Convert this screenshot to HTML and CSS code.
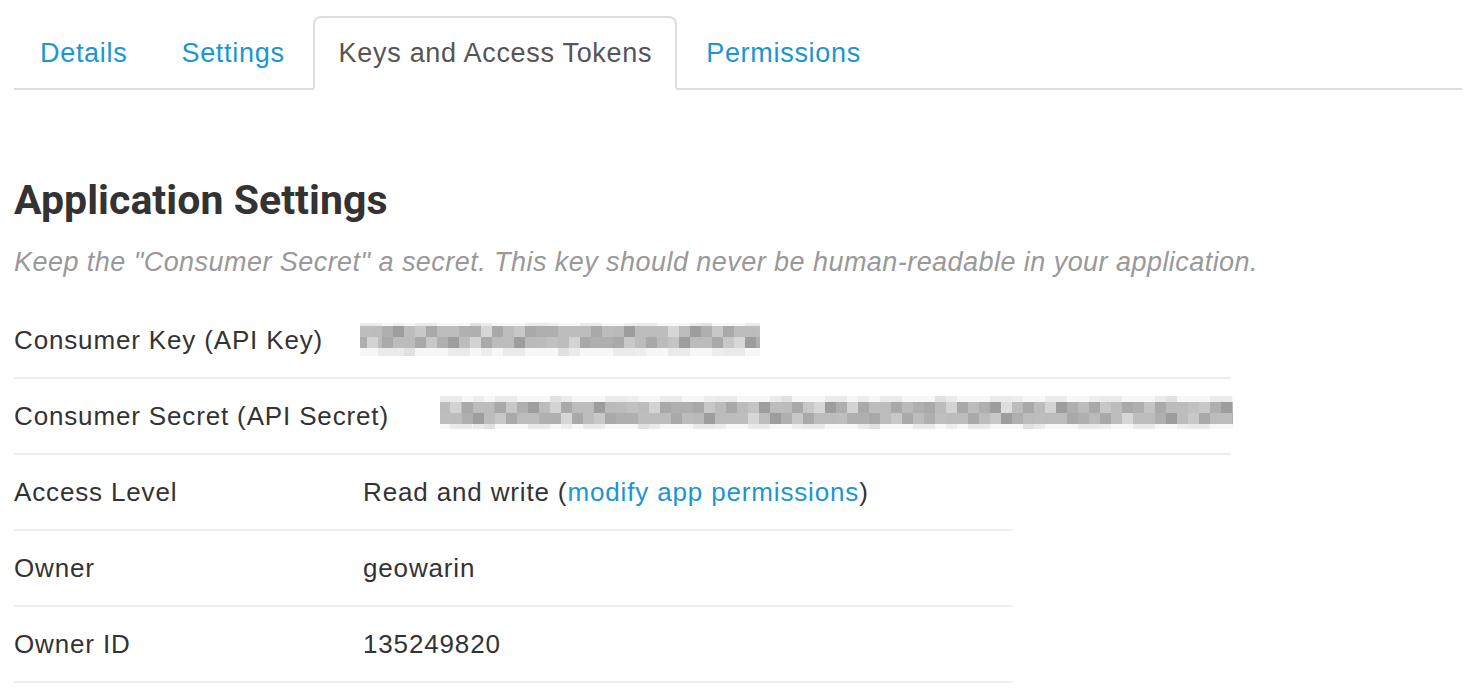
FILE: index.html
```html
<!DOCTYPE html>
<html lang="en">
<head>
<meta charset="utf-8">
<title>Keys and Access Tokens</title>
<link rel="stylesheet" href="styles.css">
</head>
<body>
<div class="page">
  <ul class="tabs">
    <li class="tab"><a href="#">Details</a></li>
    <li class="tab"><a href="#">Settings</a></li>
    <li class="tab active"><a href="#">Keys and Access Tokens</a></li>
    <li class="tab"><a href="#">Permissions</a></li>
  </ul>

  <h1 class="title">Application Settings</h1>
  <p class="hint">Keep the "Consumer Secret" a secret. This key should never be human-readable in your application.</p>

  <div class="group group-keys">
    <div class="row">
      <div class="label">Consumer Key (API Key)</div>
      <div class="value">
        <div class="blur blur-key">
          <div class="strip faint faint-top"></div>
          <div class="strip dark"></div>
          <div class="strip dark alt"></div>
          <div class="strip faint faint-bottom"></div>
        </div>
      </div>
    </div>
    <div class="row">
      <div class="label label-wide">Consumer Secret (API Secret)</div>
      <div class="value">
        <div class="blur blur-secret">
          <div class="strip faint faint-top tall"></div>
          <div class="strip dark alt"></div>
          <div class="strip dark"></div>
          <div class="strip faint faint-bottom short"></div>
        </div>
      </div>
    </div>
  </div>

  <div class="group group-info">
    <div class="row">
      <div class="label">Access Level</div>
      <div class="value">Read and write (<a class="link" href="#">modify app permissions</a>)</div>
    </div>
    <div class="row">
      <div class="label">Owner</div>
      <div class="value">geowarin</div>
    </div>
    <div class="row">
      <div class="label">Owner ID</div>
      <div class="value">135249820</div>
    </div>
  </div>
</div>
</body>
</html>
```

FILE: styles.css
```css
* { box-sizing: border-box; }

body {
  margin: 0;
  background: #fff;
  color: #333;
  font-family: "Liberation Sans", Arial, sans-serif;
}

.page {
  padding: 16px 17px 0 14px;
}

/* Tabs */
.tabs {
  display: flex;
  list-style: none;
  margin: 0;
  padding: 0;
  border-bottom: 2px solid #ddd;
}

.tab {
  margin-right: 3px;
  margin-bottom: -2px;
}

.tab a {
  display: block;
  padding: 0 23px 0 24px;
  line-height: 70px;
  border: 2px solid transparent;
  border-radius: 8px 8px 0 0;
  font-size: 27px;
  letter-spacing: 0.7px;
  color: #1b96d1;
  text-decoration: none;
}

.tab.active a {
  border-color: #ddd;
  border-bottom-color: #fff;
  background: #fff;
  color: #555;
}

/* Heading */
.title {
  margin: 86px 0 0;
  font-family: Roboto, "Liberation Sans", sans-serif;
  font-weight: 700;
  font-size: 41px;
  line-height: 48px;
  color: #333;
  letter-spacing: 0.05px;
}

.hint {
  margin: 20px 0 0;
  font-size: 27px;
  line-height: 36px;
  font-style: italic;
  color: #999;
  letter-spacing: 0.45px;
}

/* Rows */
.group {
  margin-top: 23px;
}

.group + .group {
  margin-top: 0;
}

.group-keys { width: 1217px; }
.group-info { width: 999px; }

.row {
  display: flex;
  align-items: center;
  height: 76px;
  border-bottom: 2px solid #eee;
  font-size: 26px;
  letter-spacing: 0.85px;
  color: #333;
}

.label {
  flex: 0 0 auto;
  width: 349px;
}

.label-wide {
  width: 426px;
}

.value {
  flex: 1 1 auto;
}

.link {
  color: #1b96d1;
  text-decoration: none;
}

/* Pixelated (blurred) secrets */
.blur {
  display: flex;
  flex-direction: column;
}

.blur-key {
  width: 400px;
  margin-left: -3px;
  margin-top: -2px;
}

.blur-secret {
  width: 793px;
  margin-top: -8px;
}

.strip {
  height: 11px;
}

.dark {
  background:
    repeating-linear-gradient(90deg, rgba(0,0,0,.10) 0 11px, transparent 11px 33px),
    repeating-linear-gradient(90deg, transparent 0 22px, rgba(0,0,0,.07) 22px 44px, transparent 44px 77px),
    repeating-linear-gradient(90deg, rgba(255,255,255,.35) 0 11px, transparent 11px 55px, rgba(255,255,255,.18) 55px 66px, transparent 66px 99px),
    repeating-linear-gradient(90deg, transparent 0 121px, rgba(255,255,255,.4) 121px 132px, transparent 132px 187px),
    #bcbcbc;
}

.dark.alt {
  background-position: 22px 0, 55px 0, 11px 0, 66px 0, 0 0;
}

.faint {
  background:
    repeating-linear-gradient(90deg, rgba(0,0,0,.05) 0 22px, transparent 22px 55px),
    repeating-linear-gradient(90deg, transparent 0 33px, rgba(0,0,0,.04) 33px 44px, transparent 44px 77px),
    #f7f7f7;
}

.faint-top { height: 3px; }
.faint-top.tall { height: 6px; }
.faint-bottom { height: 8px; background-position: 33px 0, 11px 0, 0 0; }
.faint-bottom.short { height: 5px; }
```
